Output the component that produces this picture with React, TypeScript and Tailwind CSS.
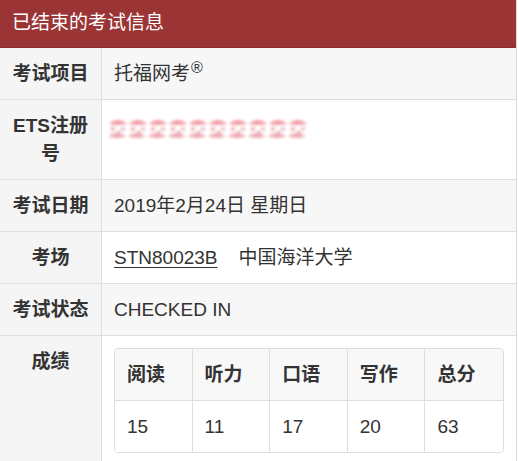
import React from "react";

const font = { fontFamily: '"Liberation Sans", "Noto Sans CJK SC", sans-serif' };

function Mask() {
  const units = Array.from({ length: 10 }, (_, i) => i);
  return (
    <svg width="204" height="26" viewBox="0 0 204 26" className="block">
      <defs>
        <filter id="blur" x="-10%" y="-30%" width="120%" height="160%">
          <feGaussianBlur stdDeviation="1.4" />
        </filter>
      </defs>
      <g filter="url(#blur)">
        {units.map((i) => (
          <g key={i} transform={`translate(${i * 20} 0)`}>
            <path d="M1 8 Q10 0 19 8 Q10 10 1 8 Z" fill="#f39aa5" />
            <circle cx="5" cy="13" r="2.2" fill="#f6aeb6" />
            <circle cx="15" cy="13" r="1.8" fill="#eb9ea8" />
            <path d="M0 20 Q9 14 18 20 Q9 24 0 20 Z" fill="#f0a8b0" />
            <path d="M9 16 l1.8 -1.8 l1.8 1.8 l-1.8 1.8 Z" fill="#c2949b" />
          </g>
        ))}
      </g>
    </svg>
  );
}

function Row({
  label,
  children,
  striped,
  last,
}: {
  label: React.ReactNode;
  children: React.ReactNode;
  striped?: boolean;
  last?: boolean;
}) {
  return (
    <div className={`flex ${last ? "" : "border-b border-[#dedede]"}`}>
      <div className="w-[102px] shrink-0 bg-[#f5f5f5] border-r border-[#dedede] px-[8px] pt-[12px] pb-[11px] text-center font-bold text-[#333] leading-[28px]">
        {label}
      </div>
      <div className={`flex-1 px-[12px] pt-[12px] pb-[11px] leading-[28px] text-[#333] ${striped ? "bg-[#f7f7f7]" : "bg-white"}`}>
        {children}
      </div>
    </div>
  );
}

export default function App() {
  const heads = ["阅读", "听力", "口语", "写作", "总分"];
  const scores = ["15", "11", "17", "20", "63"];

  return (
    <div className="w-[519px] h-[461px] overflow-hidden bg-white text-[19px]" style={font}>
      <div className="w-[517px] border-r border-[#dcdcdc]">
        <div className="h-[48px] bg-[#9b3535] border-b border-[#8a2e2e] px-[12px] flex items-center text-white">
          已结束的考试信息
        </div>

        <Row label="考试项目" striped>
          <div className="h-[28px]">
            托福网考<span className="text-[16px] leading-none relative -top-[7px] ml-[1px]">®</span>
          </div>
        </Row>
        <Row label="ETS注册号">
          <div className="-ml-[6px] mt-[4px]">
            <Mask />
          </div>
        </Row>
        <Row label="考试日期" striped>
          2019年2月24日 星期日
        </Row>
        <Row label="考场">
          <span className="underline underline-offset-[3px]">STN80023B</span>
          <span className="ml-[21px]">中国海洋大学</span>
        </Row>
        <Row label="考试状态" striped>
          CHECKED IN
        </Row>
        <Row label="成绩" last>
          <div className="border border-[#dedede] rounded-[4px] overflow-hidden mb-[10px]">
            <div className="grid grid-cols-5 bg-[#f8f8f8] border-b border-[#dedede]">
              {heads.map((h, i) => (
                <div
                  key={h}
                  className={`px-[12px] pt-[12px] pb-[11px] font-bold ${i < 4 ? "border-r border-[#dedede]" : ""}`}
                >
                  {h}
                </div>
              ))}
            </div>
            <div className="grid grid-cols-5 bg-white">
              {scores.map((s, i) => (
                <div
                  key={i}
                  className={`px-[12px] pt-[12px] pb-[11px] ${i < 4 ? "border-r border-[#dedede]" : ""}`}
                >
                  {s}
                </div>
              ))}
            </div>
          </div>
        </Row>
      </div>
    </div>
  );
}
